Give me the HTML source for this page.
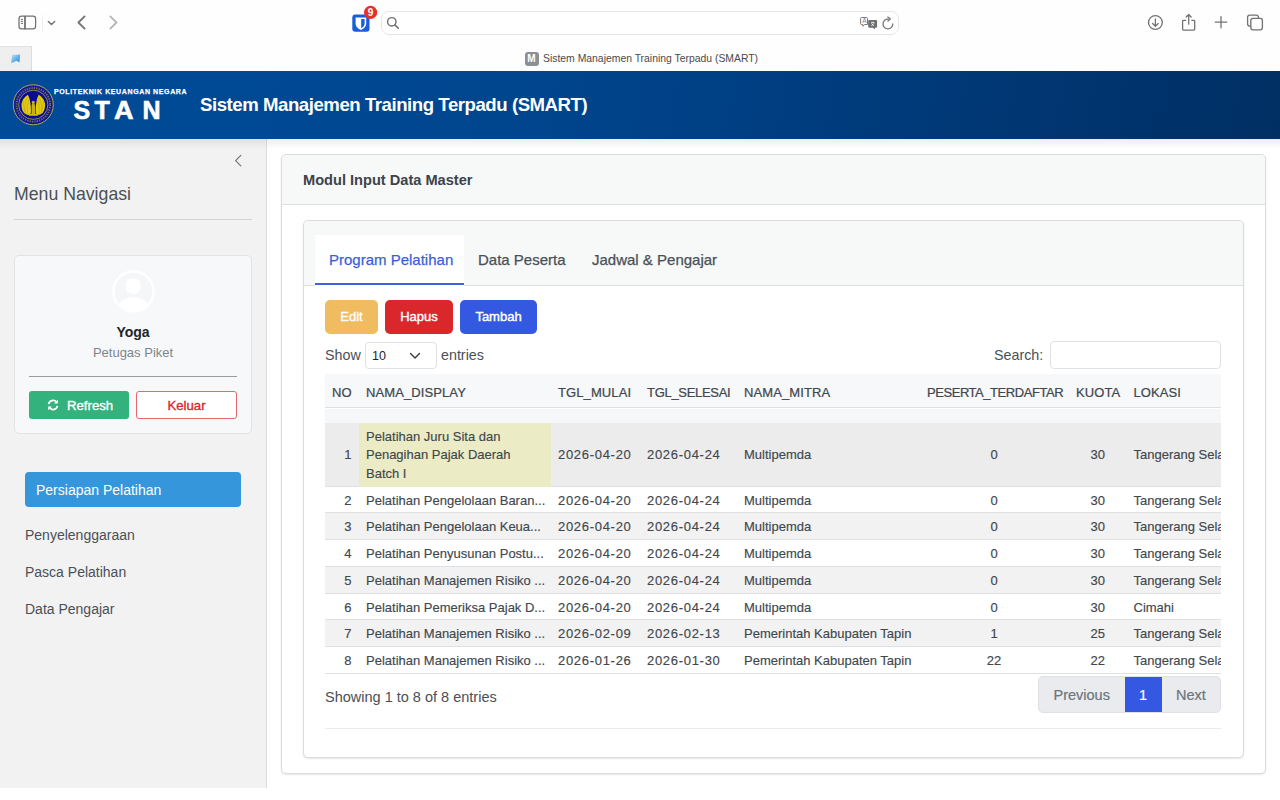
<!DOCTYPE html>
<html><head><meta charset="utf-8">
<style>
*{box-sizing:border-box;margin:0;padding:0}
html,body{width:1280px;height:800px;overflow:hidden;background:#fff;font-family:"Liberation Sans",sans-serif;color:#212529}
.a{position:absolute;white-space:nowrap}
/* safari chrome */
#toolbar{position:absolute;left:0;top:0;width:1280px;height:71px;background:#fefefe}
#pintab{position:absolute;left:0;top:46px;width:32px;height:25px;background:#efefef;border-top:1px solid #e2e2e2;border-right:1px solid #dcdcdc}
#urlbar{position:absolute;left:381px;top:11px;width:518px;height:24px;border:1.5px solid #e6e6e6;border-radius:8px;background:#fff}
#tabtitle{position:absolute;left:543px;top:53px;font-size:10.4px;color:#4a4a4a;white-space:nowrap;letter-spacing:0px}
#fav{position:absolute;left:524.5px;top:52px;width:14px;height:14px;border-radius:3px;background:#8e8e96;color:#fff;font-size:10px;font-weight:bold;text-align:center;line-height:14px}
/* header */
#hdr{position:absolute;left:0;top:71px;width:1280px;height:68px;background:linear-gradient(100deg,#004b98 0%,#00468f 40%,#003a7a 70%,#002f63 100%)}
.stan{top:24.5px;font-size:25px;font-weight:bold;color:#fff;-webkit-text-stroke:0.6px #fff}
#hdr .title{position:absolute;left:200px;top:23px;font-size:18.6px;font-weight:bold;color:#fff;white-space:nowrap;letter-spacing:-0.45px}
/* sidebar */
#side{position:absolute;left:0;top:139px;width:267px;height:649px;background:#f2f2f2;border-right:1px solid #dcdcdc}
#shadow{position:absolute;left:0;top:139px;width:1280px;height:10px;background:linear-gradient(rgba(0,0,0,.07),rgba(0,0,0,0))}
.navtitle{left:14px;top:183.5px;font-size:17.7px;color:#495057}
.navline{position:absolute;left:14px;top:219px;width:238px;height:1px;background:#d4d4d4}
#ucard{position:absolute;left:14px;top:255px;width:238px;height:179px;background:#f7f8fa;border:1px solid #e2e3e5;border-radius:5px}
.uname{left:0;width:238px;text-align:center;top:324px;font-size:14px;font-weight:bold;color:#212529}
.urole{left:0;width:238px;text-align:center;top:345px;font-size:13px;color:#80868b}
.uline{position:absolute;left:29px;top:376px;width:208px;height:1px;background:#9a9a9a}
.btn-ref{position:absolute;left:29px;top:391px;width:100px;height:28px;background:#34b27e;border-radius:3px;color:#fff;font-size:13.2px;-webkit-text-stroke:0.35px #fff}
.btn-kel{position:absolute;left:136px;top:391px;width:101px;height:28px;background:#fff;border:1px solid #e2686d;border-radius:3px;color:#d7262d;font-size:13.2px;-webkit-text-stroke:0.35px #d7262d;text-align:center;line-height:27px}
.nav-act{position:absolute;left:25px;top:472px;width:216px;height:35px;background:#3596dc;border-radius:4px}
.nav-act span{position:absolute;left:11px;top:10px;font-size:14px;color:#fff}
.nav{left:25px;font-size:14px;color:#495057}
/* main */
#card{position:absolute;left:281px;top:154px;width:985px;height:620px;border:1px solid #dcdcdc;border-radius:5px;background:#fff;box-shadow:0 1px 2px rgba(0,0,0,.1)}
#cardhdr{position:absolute;left:0;top:0;width:100%;height:50px;background:#f7f8f8;border-bottom:1px solid #dedede;border-radius:5px 5px 0 0}
#cardhdr span{position:absolute;left:21px;top:17px;font-size:14.6px;font-weight:bold;color:#3d434a}
#inner{position:absolute;left:303px;top:220px;width:941px;height:538px;border:1px solid #dcdcdc;border-radius:5px;background:#fff;box-shadow:0 1px 2px rgba(0,0,0,.1)}
#tabshdr{position:absolute;left:0;top:0;width:100%;height:65px;background:#f7f8f8;border-bottom:1px solid #dedede;border-radius:5px 5px 0 0}
.tab-act{position:absolute;left:315px;top:235px;width:149px;height:50px;background:#fff;border-bottom:2px solid #3d63dd;box-shadow:0 1px 0 #fff}
.tab-act span{position:absolute;left:14px;top:16px;font-size:15px;color:#3a5fd9;-webkit-text-stroke:0.25px #3a5fd9}
.tab{top:251px;font-size:15px;color:#495057;-webkit-text-stroke:0.25px #495057}
.btn{position:absolute;top:300px;height:34px;border-radius:5px;color:#fff;font-size:13px;-webkit-text-stroke:0.4px #fff;text-align:center;line-height:34px}
.show{top:347px;font-size:14.3px;color:#495057}
#sel{position:absolute;left:365px;top:342px;width:72px;height:27px;border:1px solid #dee2e6;border-radius:4px;background:#fff}
#search{position:absolute;left:1050px;top:341px;width:171px;height:28px;border:1px solid #dee2e6;border-radius:4px;background:#fff}
/* table */
#tbl{position:absolute;left:325px;top:374px;width:896px;height:300px;overflow:hidden}
.th{position:absolute;left:0;top:0;width:896px;height:34px;background:#f7f8fa;border-bottom:1px solid #dfe2e5}
.sp{position:absolute;left:0;top:35px;width:896px;height:14px;background:#f6f7f9}
.row{position:absolute;left:0;width:896px;border-bottom:1px solid #dde1e4}
.c{position:absolute;white-space:nowrap;font-size:13px;color:#41474d;-webkit-text-stroke:0.15px #41474d}
.h{position:absolute;white-space:nowrap;font-size:13px;color:#41474d;top:10.5px;letter-spacing:0.1px;-webkit-text-stroke:0.22px #41474d}
.hl{position:absolute;background:#ebebc5}
.dt{letter-spacing:0.7px}
.footer-txt{left:325px;top:689px;font-size:14.5px;color:#495057}
#pager{position:absolute;left:1038px;top:676px;width:183px;height:37px;background:#e9ebee;border:1px solid #dfe1e4;border-radius:5px;overflow:hidden}
.bline{position:absolute;left:325px;top:728px;width:896px;height:1px;background:#e9ebee}
</style></head><body>
<div id="toolbar"></div>
<div id="pintab"></div>
<div id="urlbar"></div>
<svg style="position:absolute;left:0;top:0" width="1280" height="46" viewBox="0 0 1280 46">
<g fill="none" stroke="#727272" stroke-width="1.25" stroke-linecap="round" stroke-linejoin="round">
<rect x="19" y="16.2" width="16.6" height="12.6" rx="2.6"/>
<line x1="25" y1="16.6" x2="25" y2="28.4" stroke-width="1.8"/>
<line x1="21.2" y1="19.4" x2="22.6" y2="19.4" stroke-width="1"/>
<line x1="21.2" y1="21.4" x2="22.6" y2="21.4" stroke-width="1"/>
<line x1="21.2" y1="23.4" x2="22.6" y2="23.4" stroke-width="1"/>
<path d="M48.3 21.4 L51.5 24.6 L54.7 21.4" stroke-width="1.4"/>
<path d="M84.6 16.4 L78.4 22.5 L84.6 28.6" stroke-width="1.8"/>
<path d="M110.3 16.4 L116.5 22.5 L110.3 28.6" stroke="#b5b5b5" stroke-width="1.8"/>
<circle cx="391.8" cy="21.8" r="4.2" stroke="#707070" stroke-width="1.4"/>
<line x1="394.9" y1="24.9" x2="398.3" y2="28.3" stroke="#707070" stroke-width="1.6"/>
<path d="M892.8 23.8 A4.9 4.9 0 1 1 888.4 19.1" stroke="#757575" stroke-width="1.3"/>
<circle cx="1155.4" cy="22.5" r="6.9" stroke="#727272" stroke-width="1.3"/>
<path d="M1155.4 18.8 L1155.4 26.2 M1152.6 23.5 L1155.4 26.3 L1158.2 23.5" stroke="#727272" stroke-width="1.25"/>
<path d="M1185.6 20.3 L1183.4 20.3 Q1182.6 20.3 1182.6 21.1 L1182.6 29.3 Q1182.6 30.1 1183.4 30.1 L1193.9 30.1 Q1194.7 30.1 1194.7 29.3 L1194.7 21.1 Q1194.7 20.3 1193.9 20.3 L1191.8 20.3" stroke="#727272" stroke-width="1.3"/>
<path d="M1188.7 24.2 L1188.7 14.6 M1186.2 17 L1188.7 14.5 L1191.2 17" stroke="#727272" stroke-width="1.25"/>
<path d="M1221 16.6 L1221 27.8 M1215.3 22.2 L1226.7 22.2" stroke="#727272" stroke-width="1.3"/>
<path d="M1250.6 26.2 Q1247.6 26.2 1247.6 24 L1247.6 17.3 Q1247.6 15.1 1249.8 15.1 L1256.3 15.1 Q1258.5 15.1 1258.6 18" stroke="#727272" stroke-width="1.3"/>
<rect x="1250.8" y="18.3" width="11.6" height="11.5" rx="2.2" stroke="#727272" stroke-width="1.3"/>
</g>
<line x1="42.6" y1="15" x2="42.6" y2="31" stroke="#eeeeee" stroke-width="1"/>
<path d="M887.4 16.8 L890.4 19.1 L887.5 21.4" fill="none" stroke="#757575" stroke-width="1.3" stroke-linejoin="round"/>
<path d="M861.6 17.5 Q860.6 17.5 860.6 18.6 L860.6 23.4 Q860.6 24.5 861.6 24.5 L862.8 24.5 L862.8 26.2 L864.7 24.5 L867.5 24.5 L867.5 18.6 Q867.5 17.5 866.5 17.5 Z" fill="#fff" stroke="#7a7a7a" stroke-width="1"/>
<text x="862.2" y="23.3" font-size="6.5" fill="#7a7a7a" font-family="Liberation Sans">A</text>
<path d="M869.2 20.1 L876.1 20.1 Q877.1 20.1 877.1 21.2 L877.1 26.6 Q877.1 27.7 876.1 27.7 L874.9 27.7 L874.9 29.6 L872.9 27.7 L869.2 27.7 Q868.2 27.7 868.2 26.6 L868.2 21.2 Q868.2 20.1 869.2 20.1 Z" fill="#6e6e6e"/>
<path d="M871 22.6 L874.4 22.6 M872.7 21.8 L872.7 22.6 M871.3 26 L874 23.3 M874 26 L871.5 23.5" stroke="#fff" stroke-width="0.8"/>
<rect x="352.3" y="14.5" width="17.2" height="17.2" rx="3" fill="#175ddc"/>
<path d="M355.6 17.4 L366.2 17.4 L366.2 23.8 Q366.2 27.6 360.9 30 Q355.6 27.6 355.6 23.8 Z" fill="#fff"/>
<path d="M361.2 19 L364.6 19 L364.6 23.8 Q364.6 26.5 361.2 28.3 Z" fill="#175ddc"/>
<circle cx="370.6" cy="12.4" r="6.6" fill="#e8302a"/>
<text x="370.6" y="16.2" font-size="10" font-weight="bold" fill="#fff" text-anchor="middle" font-family="Liberation Sans">9</text>
</svg>
<svg style="position:absolute;left:8px;top:52px" width="18" height="16" viewBox="0 0 18 16"><defs><linearGradient id="fg" x1="0" y1="0" x2="1" y2="1"><stop offset="0" stop-color="#bfe2f7"/><stop offset="1" stop-color="#1384d6"/></linearGradient></defs><path d="M4 3 L12.2 2.6 L11.4 10.6 L8.6 8.8 L3.2 11.2 Z" fill="url(#fg)"/></svg>
<div id="fav">M</div>
<div id="tabtitle">Sistem Manajemen Training Terpadu (SMART)</div>

<div id="hdr"><svg style="position:absolute;left:12px;top:12px" width="43" height="43" viewBox="0 0 43 43">
<circle cx="21.3" cy="21.8" r="20" fill="#151b8e" stroke="#c4b34a" stroke-width="0.9"/>
<circle cx="21.3" cy="21.8" r="16.8" fill="none" stroke="#b3a23c" stroke-width="1.8" stroke-dasharray="1.1 1.3" opacity="0.7"/>
<circle cx="21.3" cy="21.8" r="14.6" fill="#0a0c95" stroke="#b8a63a" stroke-width="0.8"/>
<g transform="translate(21.3 22) scale(0.86) translate(-21.3 -22)"><path d="M15 10.2 Q9 14 7.6 20.5 Q7.2 27 10.5 31.2 Q13 33.6 16.6 33.6 L18.6 31 Q18.8 24 17.6 18 Q16.6 13 15 10.2 Z" fill="#e2cb10"/>
<path d="M27.6 10.2 Q33.6 14 35 20.5 Q35.4 27 32.1 31.2 Q29.6 33.6 26 33.6 L24 31 Q23.8 24 25 18 Q26 13 27.6 10.2 Z" fill="#e2cb10"/>
<g stroke="#9f8f10" stroke-width="0.5" fill="none" opacity="0.8">
<path d="M14.6 13 Q11 19 11.6 30"/><path d="M16 16 Q13.6 22 14.6 32"/><path d="M9.5 17 Q9.4 25 12.5 32"/>
<path d="M28 13 Q31.6 19 31 30"/><path d="M26.6 16 Q29 22 28 32"/><path d="M33.1 17 Q33.2 25 30.1 32"/>
</g>
<path d="M19.3 33.5 L19.3 22.5 Q19.3 20.3 21.3 20.3 Q23.3 20.3 23.3 22.5 L23.3 33.5 Z" fill="#c8b018"/>
<circle cx="21.3" cy="19" r="1.8" fill="#c8b018"/>
<path d="M15.5 32.2 L27.1 32.2 L26.4 34.6 L16.2 34.6 Z" fill="#d2bc14"/></g>
</svg>
<div class="a" style="left:54px;top:17.2px;font-size:7px;font-weight:bold;color:#fff;letter-spacing:0.62px;-webkit-text-stroke:0.25px #fff">POLITEKNIK KEUANGAN NEGARA</div>
<div class="a stan" style="left:73.5px">S</div><div class="a stan" style="left:94.6px">T</div><div class="a stan" style="left:114.4px;transform:scaleX(1.08);transform-origin:left">A</div><div class="a stan" style="left:142.6px">N</div><div class="title">Sistem Manajemen Training Terpadu (SMART)</div></div>

<!-- sidebar -->
<div id="side"></div>
<svg style="position:absolute;left:233px;top:154px" width="10" height="14" viewBox="0 0 10 14"><path d="M7.8 1.4 L2.6 6.6 L7.8 11.8" fill="none" stroke="#6c757d" stroke-width="1.2" stroke-linecap="round" stroke-linejoin="round"/></svg>
<div class="a navtitle">Menu Navigasi</div>
<div class="navline"></div>
<div id="ucard"></div>
<div class="a uname" style="left:14px">Yoga</div>
<div class="a urole" style="left:14px">Petugas Piket</div>
<div class="uline"></div>
<svg style="position:absolute;left:112px;top:270px" width="43" height="43" viewBox="0 0 43 43"><defs><clipPath id="avc"><circle cx="21.5" cy="21.5" r="19.5"/></clipPath></defs><circle cx="21.5" cy="21.5" r="20" fill="#f5f6f8" stroke="#fff" stroke-width="2.4"/><circle cx="21.1" cy="16.1" r="7.9" fill="#fff"/><ellipse cx="21.3" cy="40" rx="16" ry="13" fill="#fff" clip-path="url(#avc)"/></svg>
<div class="btn-ref"><svg style="position:absolute;left:18px;top:8px" width="12" height="12" viewBox="0 0 12 12"><path d="M1.6 5.2 A4.5 4.5 0 0 1 9.6 3.2" fill="none" stroke="#fff" stroke-width="1.8"/><path d="M10.9 0.8 L10.9 4.6 L7.1 4.6 Z" fill="#fff"/><path d="M10.4 6.8 A4.5 4.5 0 0 1 2.4 8.8" fill="none" stroke="#fff" stroke-width="1.8"/><path d="M1.1 11.2 L1.1 7.4 L4.9 7.4 Z" fill="#fff"/></svg><span class="a" style="left:38px;top:7px">Refresh</span></div>
<div class="btn-kel">Keluar</div>
<div class="nav-act"><span>Persiapan Pelatihan</span></div>
<div class="a nav" style="top:527px">Penyelenggaraan</div>
<div class="a nav" style="top:564px">Pasca Pelatihan</div>
<div class="a nav" style="top:601px">Data Pengajar</div>

<div id="shadow"></div>

<!-- main -->
<div id="card"><div id="cardhdr"><span>Modul Input Data Master</span></div></div>
<div id="inner"><div id="tabshdr"></div></div>
<div class="tab-act"><span>Program Pelatihan</span></div>
<div class="a tab" style="left:478px">Data Peserta</div>
<div class="a tab" style="left:592px">Jadwal &amp; Pengajar</div>
<div class="btn" style="left:325px;width:53px;background:#f1bb5f">Edit</div>
<div class="btn" style="left:385px;width:68px;background:#d9272c">Hapus</div>
<div class="btn" style="left:460px;width:77px;background:#3558e3">Tambah</div>
<div class="a show" style="left:325px">Show</div>
<div id="sel"><div class="a" style="left:6px;top:6px;font-size:12.5px;color:#212529">10</div>
<svg style="position:absolute;left:43px;top:9px" width="12" height="8" viewBox="0 0 12 8"><path d="M1.5 1.5 L6 6 L10.5 1.5" fill="none" stroke="#343a40" stroke-width="1.4" stroke-linecap="round" stroke-linejoin="round"/></svg></div>
<div class="a show" style="left:441px">entries</div>
<div class="a show" style="left:994px">Search:</div>
<div id="search"></div>

<div id="tbl">
<div class="th"></div>
<div class="h" style="left:7.0px">NO</div>
<div class="h" style="left:41.0px">NAMA_DISPLAY</div>
<div class="h" style="left:233.0px">TGL_MULAI</div>
<div class="h" style="left:322.0px;letter-spacing:-0.3px">TGL_SELESAI</div>
<div class="h" style="left:419.0px">NAMA_MITRA</div>
<div class="h" style="left:602.0px;letter-spacing:-0.45px">PESERTA_TERDAFTAR</div>
<div class="h" style="left:751.0px">KUOTA</div>
<div class="h" style="left:808.5px">LOKASI</div>
<div class="sp"></div>
<div class="row" style="top:49.00px;height:63.50px;background:#ececec"></div>
<div class="hl" style="left:33.7px;top:49.00px;width:192.3px;height:63.50px"></div>
<div class="c" style="left:41.0px;top:55.20px">Pelatihan Juru Sita dan</div>
<div class="c" style="left:41.0px;top:73.40px">Penagihan Pajak Daerah</div>
<div class="c" style="left:41.0px;top:91.80px">Batch I</div>
<div class="c" style="right:869.5px;top:73.40px">1</div>
<div class="c dt" style="left:233.0px;top:73.40px">2026-04-20</div>
<div class="c dt" style="left:322.0px;top:73.40px">2026-04-24</div>
<div class="c" style="left:419.0px;top:73.40px">Multipemda</div>
<div class="c" style="left:649.0px;width:40px;text-align:center;top:73.40px">0</div>
<div class="c" style="right:116.0px;top:73.40px">30</div>
<div class="c" style="left:808.5px;top:73.40px">Tangerang Selatan</div>
<div class="row" style="top:112.50px;height:26.50px;background:#fff"></div>
<div class="c" style="left:41.0px;top:118.70px">Pelatihan Pengelolaan Baran...</div>
<div class="c" style="right:869.5px;top:118.70px">2</div>
<div class="c dt" style="left:233.0px;top:118.70px">2026-04-20</div>
<div class="c dt" style="left:322.0px;top:118.70px">2026-04-24</div>
<div class="c" style="left:419.0px;top:118.70px">Multipemda</div>
<div class="c" style="left:649.0px;width:40px;text-align:center;top:118.70px">0</div>
<div class="c" style="right:116.0px;top:118.70px">30</div>
<div class="c" style="left:808.5px;top:118.70px">Tangerang Selatan</div>
<div class="row" style="top:139.00px;height:27.00px;background:#f2f2f2"></div>
<div class="c" style="left:41.0px;top:145.20px">Pelatihan Pengelolaan Keua...</div>
<div class="c" style="right:869.5px;top:145.20px">3</div>
<div class="c dt" style="left:233.0px;top:145.20px">2026-04-20</div>
<div class="c dt" style="left:322.0px;top:145.20px">2026-04-24</div>
<div class="c" style="left:419.0px;top:145.20px">Multipemda</div>
<div class="c" style="left:649.0px;width:40px;text-align:center;top:145.20px">0</div>
<div class="c" style="right:116.0px;top:145.20px">30</div>
<div class="c" style="left:808.5px;top:145.20px">Tangerang Selatan</div>
<div class="row" style="top:166.00px;height:26.75px;background:#fff"></div>
<div class="c" style="left:41.0px;top:172.20px">Pelatihan Penyusunan Postu...</div>
<div class="c" style="right:869.5px;top:172.20px">4</div>
<div class="c dt" style="left:233.0px;top:172.20px">2026-04-20</div>
<div class="c dt" style="left:322.0px;top:172.20px">2026-04-24</div>
<div class="c" style="left:419.0px;top:172.20px">Multipemda</div>
<div class="c" style="left:649.0px;width:40px;text-align:center;top:172.20px">0</div>
<div class="c" style="right:116.0px;top:172.20px">30</div>
<div class="c" style="left:808.5px;top:172.20px">Tangerang Selatan</div>
<div class="row" style="top:192.75px;height:26.75px;background:#f2f2f2"></div>
<div class="c" style="left:41.0px;top:198.95px">Pelatihan Manajemen Risiko ...</div>
<div class="c" style="right:869.5px;top:198.95px">5</div>
<div class="c dt" style="left:233.0px;top:198.95px">2026-04-20</div>
<div class="c dt" style="left:322.0px;top:198.95px">2026-04-24</div>
<div class="c" style="left:419.0px;top:198.95px">Multipemda</div>
<div class="c" style="left:649.0px;width:40px;text-align:center;top:198.95px">0</div>
<div class="c" style="right:116.0px;top:198.95px">30</div>
<div class="c" style="left:808.5px;top:198.95px">Tangerang Selatan</div>
<div class="row" style="top:219.50px;height:26.75px;background:#fff"></div>
<div class="c" style="left:41.0px;top:225.70px">Pelatihan Pemeriksa Pajak D...</div>
<div class="c" style="right:869.5px;top:225.70px">6</div>
<div class="c dt" style="left:233.0px;top:225.70px">2026-04-20</div>
<div class="c dt" style="left:322.0px;top:225.70px">2026-04-24</div>
<div class="c" style="left:419.0px;top:225.70px">Multipemda</div>
<div class="c" style="left:649.0px;width:40px;text-align:center;top:225.70px">0</div>
<div class="c" style="right:116.0px;top:225.70px">30</div>
<div class="c" style="left:808.5px;top:225.70px">Cimahi</div>
<div class="row" style="top:246.25px;height:26.50px;background:#f2f2f2"></div>
<div class="c" style="left:41.0px;top:252.45px">Pelatihan Manajemen Risiko ...</div>
<div class="c" style="right:869.5px;top:252.45px">7</div>
<div class="c dt" style="left:233.0px;top:252.45px">2026-02-09</div>
<div class="c dt" style="left:322.0px;top:252.45px">2026-02-13</div>
<div class="c" style="left:419.0px;top:252.45px">Pemerintah Kabupaten Tapin</div>
<div class="c" style="left:649.0px;width:40px;text-align:center;top:252.45px">1</div>
<div class="c" style="right:116.0px;top:252.45px">25</div>
<div class="c" style="left:808.5px;top:252.45px">Tangerang Selatan</div>
<div class="row" style="top:272.75px;height:26.75px;background:#fff"></div>
<div class="c" style="left:41.0px;top:278.95px">Pelatihan Manajemen Risiko ...</div>
<div class="c" style="right:869.5px;top:278.95px">8</div>
<div class="c dt" style="left:233.0px;top:278.95px">2026-01-26</div>
<div class="c dt" style="left:322.0px;top:278.95px">2026-01-30</div>
<div class="c" style="left:419.0px;top:278.95px">Pemerintah Kabupaten Tapin</div>
<div class="c" style="left:649.0px;width:40px;text-align:center;top:278.95px">22</div>
<div class="c" style="right:116.0px;top:278.95px">22</div>
<div class="c" style="left:808.5px;top:278.95px">Tangerang Selatan</div>

</div>

<div class="a footer-txt">Showing 1 to 8 of 8 entries</div>
<div id="pager">
<div class="a" style="left:14.5px;top:10px;font-size:14.5px;color:#6c757d;-webkit-text-stroke:0.2px #6c757d">Previous</div>
<div style="position:absolute;left:85.5px;top:-1px;width:37px;height:37px;background:#3558e3"></div>
<div class="a" style="left:85.5px;width:37px;text-align:center;top:10px;font-size:14.5px;color:#fff;-webkit-text-stroke:0.2px #fff">1</div>
<div class="a" style="left:137px;top:10px;font-size:14.5px;color:#6c757d;-webkit-text-stroke:0.2px #6c757d">Next</div>
</div>
<div class="bline"></div>
</body></html>
